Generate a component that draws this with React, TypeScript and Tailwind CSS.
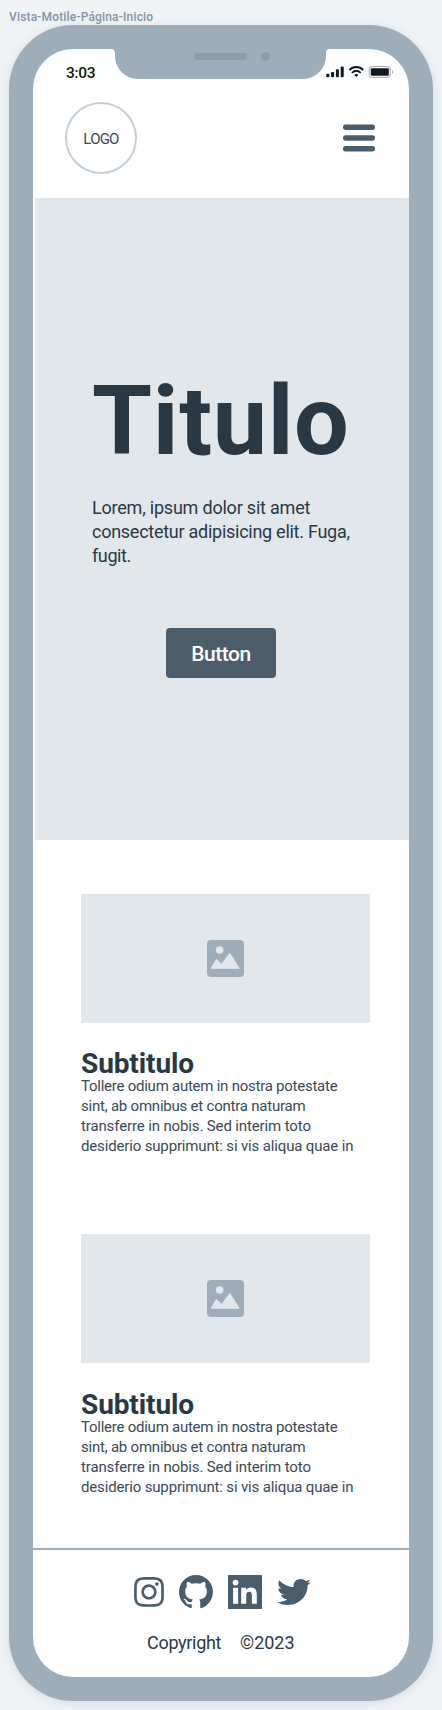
import { FaInstagram, FaTwitter } from "react-icons/fa";

type Line = { text: string; className: string };

const cardLines: Line[] = [
  { text: "Tollere odium autem in nostra potestate", className: "tracking-[-0.245px]" },
  { text: "sint, ab omnibus et contra naturam", className: "tracking-[-0.22px]" },
  { text: "transferre in nobis. Sed interim toto", className: "tracking-[-0.13px]" },
  { text: "desiderio supprimunt: si vis aliqua quae in", className: "tracking-[-0.155px]" },
];

const heroLines: Line[] = [
  { text: "Lorem, ipsum dolor sit amet", className: "tracking-[-0.21px]" },
  { text: "consectetur adipisicing elit. Fuga,", className: "tracking-[-0.265px]" },
  { text: "fugit.", className: "tracking-[-0.4px]" },
];

function Notch() {
  return (
    <svg className="absolute left-[78px] top-0" width="219" height="30" viewBox="0 0 219 30">
      <path
        d="M0 0C2.6 0 4 1.4 4 4V6C4 20 14 30 28 30H191C205 30 215 20 215 6V4C215 1.4 216.4 0 219 0Z"
        fill="#9eadba"
      />
      <rect x="83" y="4" width="53" height="7" rx="3.5" fill="#8d9dac" />
      <circle cx="154.3" cy="7.5" r="4.6" fill="#8d9dac" />
    </svg>
  );
}

function StatusIcons() {
  return (
    <svg width="68" height="14" viewBox="0 0 68 14" fill="#101820">
      <rect x="0.3" y="8.7" width="3" height="3.5" rx="0.8" />
      <rect x="5.1" y="7" width="3" height="5.2" rx="0.8" />
      <rect x="9.9" y="4.3" width="3" height="7.9" rx="0.8" />
      <rect x="14.7" y="1.6" width="3" height="10.6" rx="0.8" />
      <g fill="none" stroke="#101820" strokeWidth="1.8">
        <path d="M23.4 5C27.3 1 33.3 1 37.2 5" />
        <path d="M25.9 7.9C28.6 5.3 32 5.3 34.7 7.9" />
      </g>
      <path d="M28.2 9.9C29.6 8.8 31 8.8 32.4 9.9L30.3 12Z" />
      <rect x="43.2" y="1.6" width="21" height="10.8" rx="2.6" fill="none" stroke="#a5a5aa" />
      <rect x="44.8" y="3.2" width="18" height="7.6" rx="1" />
      <path d="M66 5.2C67.4 6 67.4 8.2 66 9Z" fill="#a5a5aa" />
    </svg>
  );
}

function GithubMark() {
  return (
    <svg className="ml-[13px]" width="34" height="34" viewBox="0 0 16 16" fill="currentColor">
      <path d="M8 0C3.58 0 0 3.58 0 8c0 3.54 2.29 6.53 5.47 7.59.4.07.55-.17.55-.38 0-.19-.01-.82-.01-1.49-2.01.37-2.53-.49-2.69-.94-.09-.23-.48-.94-.82-1.13-.28-.15-.68-.52-.01-.53.63-.01 1.08.58 1.23.82.72 1.21 1.87.87 2.33.66.07-.52.28-.87.51-1.07-1.78-.2-3.64-.89-3.64-3.95 0-.87.31-1.59.82-2.15-.08-.2-.36-1.02.08-2.12 0 0 .67-.21 2.2.82.64-.18 1.32-.27 2-.27.68 0 1.36.09 2 .27 1.53-1.04 2.2-.82 2.2-.82.44 1.1.16 1.92.08 2.12.51.56.82 1.27.82 2.15 0 3.07-1.87 3.75-3.65 3.95.29.25.54.73.54 1.48 0 1.07-.01 1.93-.01 2.2 0 .21.15.46.55.38A8.013 8.013 0 0016 8c0-4.42-3.58-8-8-8z" />
    </svg>
  );
}

function LinkedinMark() {
  return (
    <svg className="ml-[15px]" width="34" height="34" viewBox="0 0 34 34">
      <rect width="34" height="34" rx="0.6" fill="#4b5c6b" />
      <circle cx="7.6" cy="7.6" r="2.9" fill="#fff" />
      <rect x="5.1" y="12.8" width="5" height="16" fill="#fff" />
      <path
        d="M13.2 12.8H18V15C18.9 13.5 20.6 12.4 22.8 12.4C27.6 12.4 28.8 15.5 28.8 20V28.8H23.9V21C23.9 18.9 23.6 16.8 21.2 16.8C18.7 16.8 18.2 18.7 18.2 20.9V28.8H13.2Z"
        fill="#fff"
      />
    </svg>
  );
}

function ImagePlaceholder() {
  return (
    <div className="flex h-[129px] w-[289px] items-center justify-center bg-[#e2e7eb]">
      <svg width="37" height="37" viewBox="0 0 37 37">
        <rect width="37" height="37" rx="4" fill="#9eadba" />
        <circle cx="12.6" cy="10" r="3.8" fill="#e2e7eb" />
        <path
          d="M4.2 28.3L9.5 19.3L14.5 24.5L22.8 13.3L32.2 28.3Z"
          fill="#e2e7eb"
          stroke="#e2e7eb"
          strokeWidth="1"
          strokeLinejoin="round"
        />
      </svg>
    </div>
  );
}

function Card({ headingGap }: { headingGap: string }) {
  return (
    <article className="w-[289px]">
      <ImagePlaceholder />
      <h2 className={`${headingGap} text-[28px] leading-[26px] font-bold tracking-[-0.1px] text-[#293845]`}>
        Subtitulo
      </h2>
      <p className="-mt-px text-[15px] leading-5 whitespace-nowrap text-[#394956]">
        {cardLines.map((line) => (
          <span key={line.text} className={`block ${line.className}`}>
            {line.text}
          </span>
        ))}
      </p>
    </article>
  );
}

export default function App() {
  return (
    <div className="h-[1710px] w-[442px] overflow-hidden bg-[#eff3f6] pt-[9px] pl-[9px] font-[Roboto,sans-serif]">
      <p className="text-xs leading-4 font-medium tracking-[0.17px] text-[#8494a2]">Vista-Motile-Página-Inicio</p>

      <div className="h-[1676px] w-[424px] rounded-[64px] bg-[#9eadba] p-6 shadow-[0_2px_10px_rgba(40,60,80,0.12)]">
        <div className="relative flex h-full flex-col overflow-hidden rounded-[40px] bg-white">
          <Notch />

          <div className="flex h-10 items-start justify-between pt-[14px] pr-[15px] pl-[33px]">
            <span className="text-[15.5px] leading-5 font-medium tracking-[-0.3px] text-[#101820]">3:03</span>
            <div className="pt-0.5">
              <StatusIcons />
            </div>
          </div>

          <header className="flex h-[109px] items-start justify-between pt-[13px] pr-[34px] pl-8">
            <div className="flex size-[72px] items-center justify-center rounded-full border-2 border-[#c3cfd9] pt-0.5 text-[15px] tracking-[-0.8px] text-[#394956]">
              LOGO
            </div>
            <svg className="mt-[22px]" width="32" height="28" viewBox="0 0 32 28" fill="#4b5c6b">
              <rect y="0.4" width="32" height="5.6" rx="2.4" />
              <rect y="11.2" width="32" height="5.6" rx="2.4" />
              <rect y="22" width="32" height="5.6" rx="2.4" />
            </svg>
          </header>

          <section className="ml-0.5 h-[642px] bg-[#e2e7eb] pt-[175px] pl-[57px] text-[#293845]">
            <h1 className="text-[97px] leading-[97px] font-bold tracking-[0.7px]">Titulo</h1>
            <p className="mt-[26px] text-lg leading-6 whitespace-nowrap">
              {heroLines.map((line) => (
                <span key={line.text} className={`block ${line.className}`}>
                  {line.text}
                </span>
              ))}
            </p>
            <button className="mt-[60px] ml-[74px] h-[50px] w-[110px] rounded bg-[#4b5c6b] pt-[3px] text-[21px] font-medium tracking-[-0.5px] text-white">
              Button
            </button>
          </section>

          <section className="flex flex-col gap-[78px] pt-[54px] pl-12">
            <Card headingGap="mt-[28px]" />
            <Card headingGap="mt-[29px]" />
          </section>

          <footer className="mt-[51px] border-t-2 border-[#9eadba]">
            <div className="mt-[25px] flex h-[34px] items-center pl-[99px] text-[#4b5c6b]">
              <FaInstagram size={34} />
              <GithubMark />
              <LinkedinMark />
              <FaTwitter
                className="ml-[15px] h-[26px] w-[34px]"
                viewBox="0 48 512 416"
                preserveAspectRatio="none"
              />
            </div>
            <p className="mt-[22px] flex pl-[114px] text-lg leading-6 text-[#293845]">
              <span className="w-[93px] tracking-[-0.3px]">Copyright</span>
              <span>©2023</span>
            </p>
          </footer>
        </div>
      </div>
    </div>
  );
}
